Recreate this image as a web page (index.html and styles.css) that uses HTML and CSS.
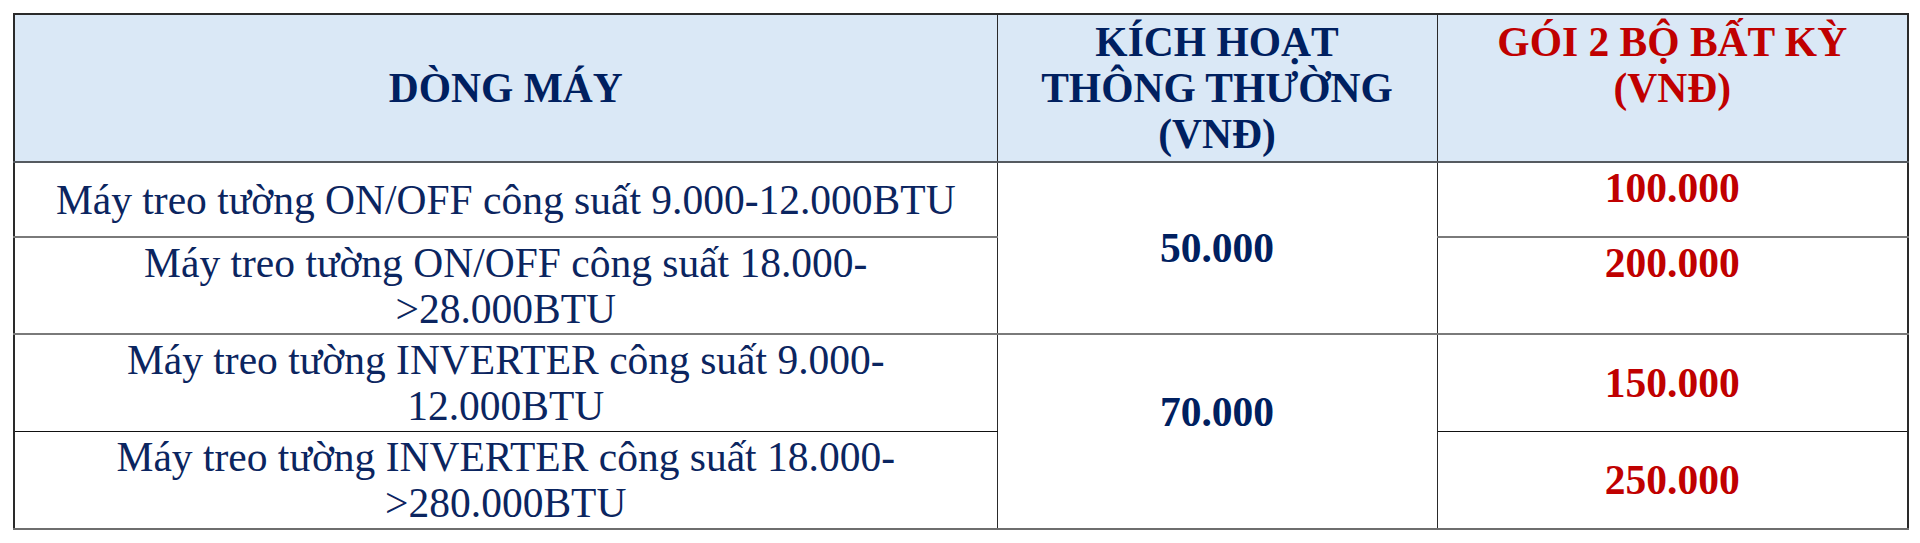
FILE: index.html
```html
<!DOCTYPE html>
<html lang="vi">
<head>
<meta charset="utf-8">
<title>Bảng giá kích hoạt</title>
<link rel="stylesheet" href="styles.css">
</head>
<body>
<div class="page">
  <table class="price">
    <colgroup>
      <col class="c1">
      <col class="c2">
      <col class="c3">
    </colgroup>
    <thead>
      <tr class="r-head">
        <th class="h-model">DÒNG MÁY</th>
        <th class="h-normal">KÍCH HOẠT<br>THÔNG THƯỜNG<br>(VNĐ)</th>
        <th class="h-pack">GÓI 2 BỘ BẤT KỲ<br>(VNĐ)</th>
      </tr>
    </thead>
    <tbody>
      <tr class="r1">
        <td class="model">Máy treo tường ON/OFF công suất 9.000-12.000BTU</td>
        <td class="normal" rowspan="2">50.000</td>
        <td class="pack top">100.000</td>
      </tr>
      <tr class="r2 gray">
        <td class="model">Máy treo tường ON/OFF công suất 18.000-<br>&gt;28.000BTU</td>
        <td class="pack top">200.000</td>
      </tr>
      <tr class="r3 gray">
        <td class="model">Máy treo tường INVERTER công suất 9.000-<br>12.000BTU</td>
        <td class="normal raise" rowspan="2">70.000</td>
        <td class="pack">150.000</td>
      </tr>
      <tr class="r4 dark">
        <td class="model">Máy treo tường INVERTER công suất 18.000-<br>&gt;280.000BTU</td>
        <td class="pack">250.000</td>
      </tr>
    </tbody>
  </table>
</div>
</body>
</html>
```

FILE: styles.css
```css
html, body {
  margin: 0;
  padding: 0;
  background: #ffffff;
}

.page {
  padding: 13px 0 0 13px;
}

.price {
  width: 1894px;
  border-collapse: collapse;
  table-layout: fixed;
  font-family: "Liberation Serif", "Times New Roman", serif;
  color: #0b2560;
  border-top: 2px solid #2a2a2a;
  border-left: 2px solid #2a2a2a;
  border-right: 2px solid #2a2a2a;
  border-bottom: 2px solid #6e6e6e;
}

.c1 { width: 983px; }
.c2 { width: 440px; }
.c3 { width: 471px; }

th, td {
  padding: 0 4px;
  text-align: center;
  line-height: 46px;
  border-left: 1px solid #2a2a2a;
  border-right: 1px solid #2a2a2a;
}

th {
  background: #dae8f6;
  font-size: 41.5px;
  font-weight: 700;
  color: #002060;
  vertical-align: top;
  padding-top: 4px;
  border-bottom: 2px solid #555a60;
}

.r-head { height: 148px; }

.h-model { vertical-align: middle; padding-top: 0; }
.h-pack { color: #c00000; }

td {
  font-size: 41.5px;
  vertical-align: middle;
}

.r1 { height: 75px; }
.r2 { height: 97px; }
.r3 { height: 97px; }
.r4 { height: 98px; }

.r1 td, .r2 td { border-bottom: 2px solid #7a7a7a; }
.r3 td { border-bottom: 1px solid #111111; }
.r2 td.normal, .r1 td.normal { border-bottom: 2px solid #7a7a7a; }

.normal {
  font-size: 41.5px;
  font-weight: 700;
  color: #002060;
}

.raise {
  padding-bottom: 40px;
}

.pack {
  font-size: 41.5px;
  font-weight: 700;
  color: #c00000;
}

.pack.top {
  vertical-align: top;
  padding-top: 2px;
}
```
